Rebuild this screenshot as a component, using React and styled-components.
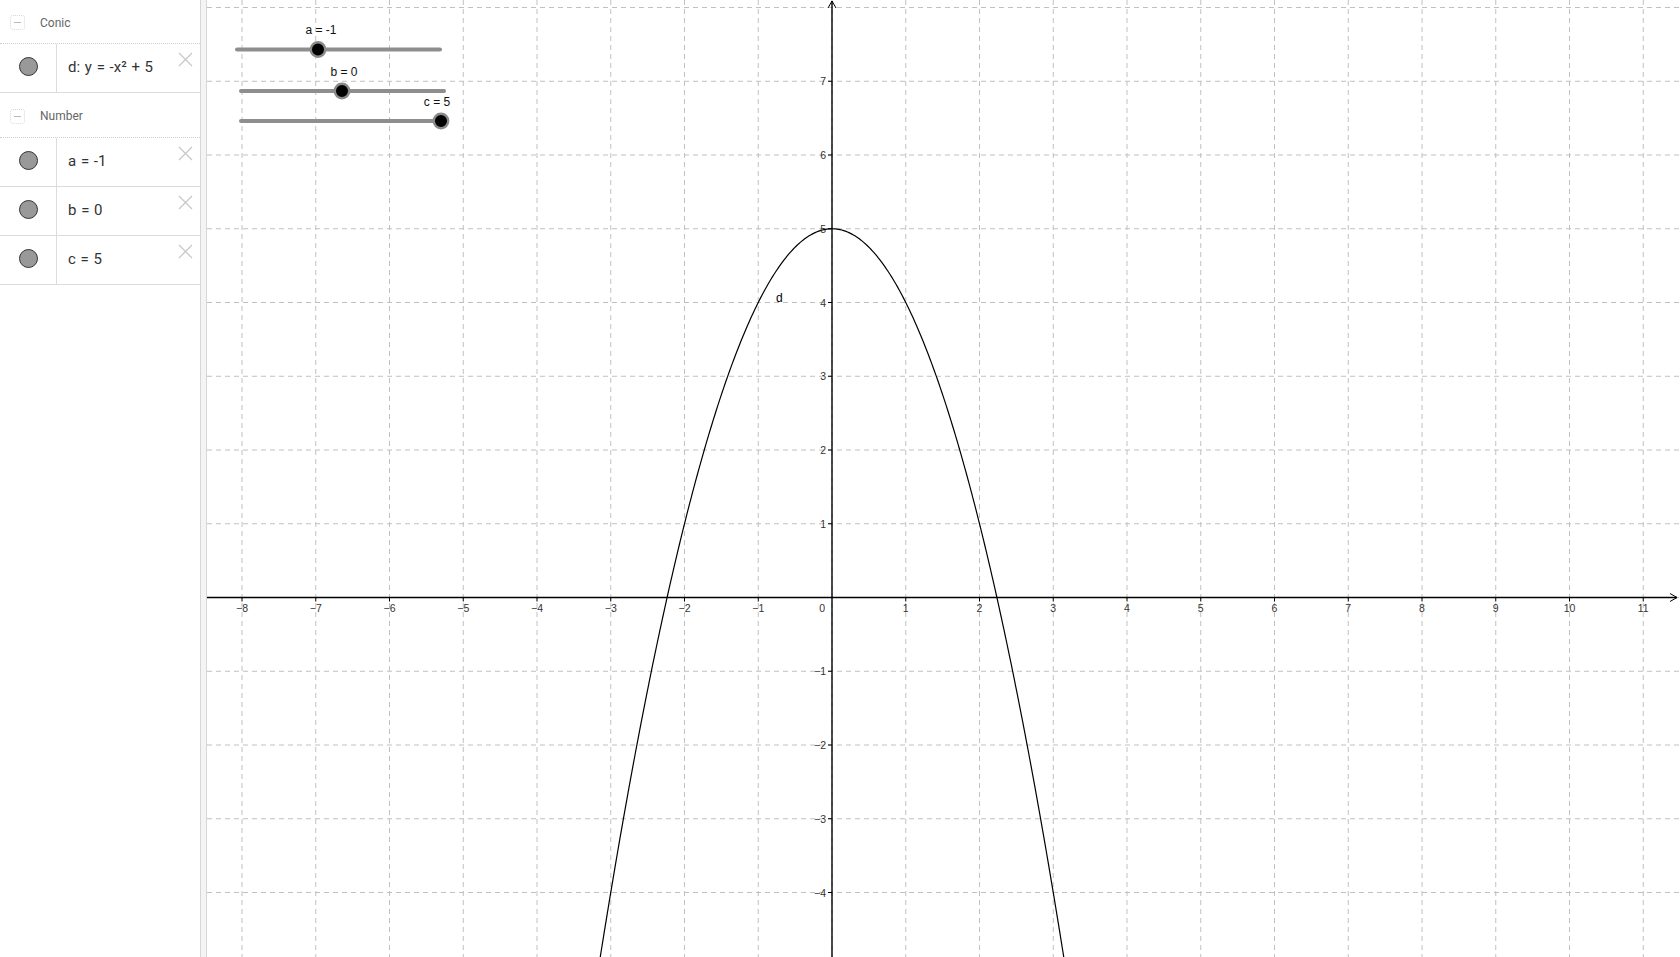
import React from 'react';
import styled, { createGlobalStyle } from 'styled-components';

const ORIGIN_X = 832;
const ORIGIN_Y = 597.5;
const UNIT = 73.75;
const VIEW_LEFT = 207;
const VIEW_W = 1680 - VIEW_LEFT;
const VIEW_H = 957;

const px = (x) => ORIGIN_X + x * UNIT;
const py = (y) => ORIGIN_Y - y * UNIT;

const groups = [
  { title: 'Conic', height: 44, items: ['d: y = -x² + 5'] },
  { title: 'Number', height: 45, items: ['a = -1', 'b = 0', 'c = 5'] },
];

const sliders = [
  { label: 'a = -1', x1: 237, x2: 440, y: 49.5, knob: 318, lx: 321, ly: 34 },
  { label: 'b = 0', x1: 241, x2: 444, y: 91, knob: 342, lx: 344, ly: 76 },
  { label: 'c = 5', x1: 241, x2: 444, y: 121, knob: 441, lx: 437, ly: 106 },
];

const GlobalStyle = createGlobalStyle`
  html, body {
    margin: 0;
    padding: 0;
    background: #fff;
    overflow: hidden;
  }
  body {
    font-family: Roboto, "Liberation Sans", sans-serif;
  }
`;

const Page = styled.div`
  display: flex;
  width: 1680px;
  height: 957px;
  background: #fff;
`;

const AlgebraPanel = styled.div`
  width: 200px;
  flex-shrink: 0;
  display: flex;
  flex-direction: column;
`;

const GroupHeader = styled.div`
  height: ${(p) => p.$h}px;
  box-sizing: border-box;
  display: flex;
  align-items: center;
  gap: 15px;
  padding: 2px 0 0 10px;
  border-bottom: 1px dotted #cfcfcf;
  color: #666;
  font-size: 12px;
`;

const Collapse = styled.span`
  width: 13px;
  height: 13px;
  border: 1px dotted #d8d8d8;
  border-radius: 3px;
  display: flex;
  align-items: center;
  justify-content: center;

  &::after {
    content: '';
    width: 7px;
    height: 1px;
    background: #bbb;
  }
`;

const Row = styled.div`
  height: 49px;
  box-sizing: border-box;
  display: flex;
  position: relative;
  border-bottom: 1px solid #dcdcdc;
`;

const Marker = styled.div`
  width: 57px;
  flex-shrink: 0;
  box-sizing: border-box;
  padding-bottom: 3px;
  border-right: 1px solid #dcdcdc;
  display: flex;
  align-items: center;
  justify-content: center;
`;

const Dot = styled.span`
  width: 17px;
  height: 17px;
  border-radius: 50%;
  background: #999;
  border: 1px solid #333;
`;

const Formula = styled.div`
  display: flex;
  align-items: center;
  padding: 0 0 3px 11px;
  font-size: 15px;
  word-spacing: 1px;
  color: #333;
`;

const Close = styled.svg`
  position: absolute;
  top: 8px;
  right: 7px;
  width: 15px;
  height: 15px;
`;

const Splitter = styled.div`
  width: 5px;
  flex-shrink: 0;
  background: #f4f4f4;
  border-left: 1px solid #d6d6d6;
  border-right: 1px solid #d6d6d6;
`;

const Graphics = styled.svg`
  display: block;
  flex: 1;
  height: 957px;
  font-family: "Liberation Sans", Arial, sans-serif;
`;

const minus = (n) => (n < 0 ? '\u2212' + Math.abs(n) : String(n));

const parabola = () => {
  const pts = [];
  for (let x = -3.35; x <= 3.35; x += 0.02) {
    pts.push(`${px(x).toFixed(2)},${py(-x * x + 5).toFixed(2)}`);
  }
  return 'M' + pts.join(' L');
};

const GraphView = () => {
  const xs = [];
  for (let k = -8; k <= 11; k++) xs.push(k);
  const ys = [];
  for (let k = -4; k <= 8; k++) ys.push(k);

  return (
    <Graphics viewBox={`0 0 ${VIEW_W} ${VIEW_H}`} width={VIEW_W} height={VIEW_H}>
      <g transform={`translate(${-VIEW_LEFT},0)`}>
        <g stroke="#c0c0c0" strokeWidth="1" strokeDasharray="5 4">
          {xs.map((k) => (
            <line key={'v' + k} x1={px(k)} y1={0} x2={px(k)} y2={VIEW_H} />
          ))}
          {ys.map((k) => (
            <line key={'h' + k} x1={VIEW_LEFT} y1={py(k)} x2={1680} y2={py(k)} />
          ))}
        </g>

        <g stroke="#000" strokeWidth="1.4" fill="none">
          <line x1={VIEW_LEFT} y1={ORIGIN_Y} x2={1677} y2={ORIGIN_Y} />
          <polyline points={`1670,${ORIGIN_Y - 4} 1677,${ORIGIN_Y} 1670,${ORIGIN_Y + 4}`} strokeWidth="1" />
          <line x1={ORIGIN_X} y1={VIEW_H} x2={ORIGIN_X} y2={1} />
          <polyline points={`${ORIGIN_X - 4},8 ${ORIGIN_X},1 ${ORIGIN_X + 4},8`} strokeWidth="1" />
          {xs.filter((k) => k !== 0).map((k) => (
            <line key={'tx' + k} x1={px(k)} y1={ORIGIN_Y} x2={px(k)} y2={ORIGIN_Y + 4} strokeWidth="1" />
          ))}
          {ys.filter((k) => k !== 0 && k < 8).map((k) => (
            <line key={'ty' + k} x1={ORIGIN_X - 4} y1={py(k)} x2={ORIGIN_X} y2={py(k)} strokeWidth="1" />
          ))}
        </g>

        <g fontSize="10.5" fill="#333">
          {xs.filter((k) => k !== 0).map((k) => (
            <text key={'lx' + k} x={px(k)} y={ORIGIN_Y + 14} textAnchor="middle">{minus(k)}</text>
          ))}
          <text x={ORIGIN_X - 7} y={ORIGIN_Y + 14} textAnchor="end">0</text>
          {ys.filter((k) => k !== 0 && k < 8).map((k) => (
            <text key={'ly' + k} x={ORIGIN_X - 6} y={py(k) + 4} textAnchor="end">{minus(k)}</text>
          ))}
        </g>

        <path d={parabola()} stroke="#000" strokeWidth="1.2" fill="none" />
        <text x={776} y={302} fontSize="12" fill="#000">d</text>

        {sliders.map((s) => (
          <g key={s.label}>
            <line x1={s.x1} y1={s.y} x2={s.x2} y2={s.y} stroke="#8e8e8e" strokeWidth="4" strokeLinecap="round" />
            <circle cx={s.knob} cy={s.y} r="7.2" fill="#000" stroke="#8a8a8a" strokeWidth="2.4" />
            <text x={s.lx} y={s.ly} fontSize="12" textAnchor="middle" fill="#111">{s.label}</text>
          </g>
        ))}
      </g>
    </Graphics>
  );
};

export default function App() {
  return (
    <Page>
      <GlobalStyle />
      <AlgebraPanel>
        {groups.map((g) => (
          <React.Fragment key={g.title}>
            <GroupHeader $h={g.height}>
              <Collapse />
              {g.title}
            </GroupHeader>
            {g.items.map((item) => (
              <Row key={item}>
                <Marker>
                  <Dot />
                </Marker>
                <Formula>{item}</Formula>
                <Close viewBox="0 0 15 15">
                  <path d="M1 1 L14 14 M14 1 L1 14" stroke="#c8c8c8" strokeWidth="1.3" fill="none" />
                </Close>
              </Row>
            ))}
          </React.Fragment>
        ))}
      </AlgebraPanel>
      <Splitter />
      <GraphView />
    </Page>
  );
}
